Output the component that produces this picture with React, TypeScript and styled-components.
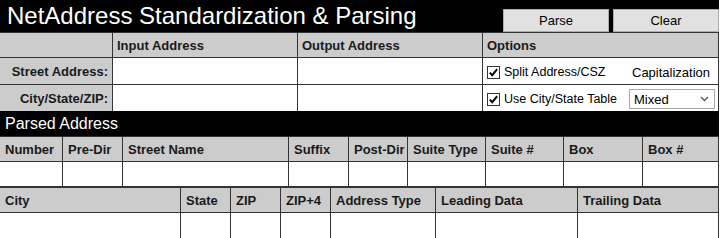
import styled, { createGlobalStyle } from 'styled-components'

const GlobalStyle = createGlobalStyle`
  html, body {
    margin: 0;
    padding: 0;
    background: #fff;
  }
  body {
    font-family: "Liberation Sans", Arial, sans-serif;
    color: #111;
  }
`

const Page = styled.div`
  width: 719px;
`

const TitleBar = styled.div`
  height: 32px;
  background: #000;
  display: flex;
  justify-content: space-between;
  align-items: flex-end;
  padding-left: 7px;
`

const Title = styled.h1`
  margin: 0;
  align-self: stretch;
  font-size: 24px;
  font-weight: normal;
  line-height: 32px;
  color: #fff;
  white-space: nowrap;
`

const ButtonGroup = styled.div`
  display: flex;
  gap: 4px;
`

const Button = styled.button`
  width: 106px;
  height: 23px;
  box-sizing: border-box;
  background: #e1e1e1;
  border: 1px solid #adadad;
  border-radius: 0;
  font-family: "Liberation Sans", Arial, sans-serif;
  font-size: 13px;
  color: #000;
  padding: 0;
`

const Grid = styled.div<{ $cols: string; $rows: string; $top?: number }>`
  display: grid;
  grid-template-columns: ${p => p.$cols};
  grid-template-rows: ${p => p.$rows};
  gap: 1px;
  background: #333;
  border-top: ${p => p.$top ?? 1}px solid #333;
  border-right: 1px solid #333;
`

const HeadCell = styled.div<{ $pad?: number }>`
  background: #cccccc;
  display: flex;
  align-items: center;
  padding-left: ${p => p.$pad ?? 5}px;
  padding-top: 1px;
  font-size: 13px;
  font-weight: bold;
  color: #1a1a1a;
  white-space: nowrap;
  overflow: hidden;
`

const LabelCell = styled(HeadCell)`
  justify-content: flex-end;
  padding-left: 0;
  padding-right: 4px;
`

const DataCell = styled.div`
  background: #fff;
`

const OptionCell = styled.div`
  background: #fff;
  display: grid;
  grid-template-columns: 1fr 86px;
  align-items: center;
  padding: 2px 3px 0 4px;
  font-size: 12.5px;
  color: #000;
`

const CheckLabel = styled.label`
  display: flex;
  align-items: center;
  gap: 4px;
  white-space: nowrap;
`

const Box = styled.span`
  width: 13px;
  height: 13px;
  box-sizing: border-box;
  border: 1px solid #333;
  background: #fff;
  display: flex;
  align-items: center;
  justify-content: center;
`

const CapLabel = styled.span`
  padding-left: 3px;
  font-size: 13px;
  white-space: nowrap;
`

const Select = styled.div`
  height: 20px;
  box-sizing: border-box;
  border: 1px solid #a9a9a9;
  background: #fff;
  display: flex;
  align-items: center;
  justify-content: space-between;
  padding: 0 5px 0 4px;
  font-size: 13px;
  color: #000;
`

const SectionBar = styled.div`
  height: 25px;
  box-sizing: border-box;
  background: #000;
  color: #fff;
  font-size: 16px;
  line-height: 24px;
  padding: 1px 0 0 5px;
`

const Checkbox = ({ label }: { label: string }) => (
  <CheckLabel>
    <Box>
      <svg width="11" height="11" viewBox="0 0 11 11">
        <path d="M1.8 5.6 L4.2 8.2 L9.2 2.2" fill="none" stroke="#000" strokeWidth="1.9" />
      </svg>
    </Box>
    {label}
  </CheckLabel>
)

const streetFields: [string, number][] = [
  ['Number', 62], ['Pre-Dir', 59], ['Street Name', 165], ['Suffix', 59], ['Post-Dir', 58],
  ['Suite Type', 77], ['Suite #', 77], ['Box', 78], ['Box #', 75],
]

const cityFields: [string, number][] = [
  ['City', 180], ['State', 49], ['ZIP', 49], ['ZIP+4', 49],
  ['Address Type', 104], ['Leading Data', 141], ['Trailing Data', 140],
]

const FieldTable = ({ fields, top, lastRow }: { fields: [string, number][]; top?: number; lastRow: string }) => (
  <Grid $cols={fields.map(f => f[1] + 'px').join(' ')} $rows={`24px ${lastRow}`} $top={top}>
    {fields.map(([name]) => <HeadCell key={name}>{name}</HeadCell>)}
    {fields.map(([name]) => <DataCell key={name + '-v'} />)}
  </Grid>
)

export default function App() {
  return (
    <Page>
      <GlobalStyle />
      <TitleBar>
        <Title>NetAddress Standardization &amp; Parsing</Title>
        <ButtonGroup>
          <Button>Parse</Button>
          <Button>Clear</Button>
        </ButtonGroup>
      </TitleBar>

      <Grid $cols="112px 184px 184px 235px" $rows="24px 26px 26px">
        <HeadCell />
        <HeadCell $pad={4}>Input Address</HeadCell>
        <HeadCell $pad={4}>Output Address</HeadCell>
        <HeadCell $pad={4}>Options</HeadCell>

        <LabelCell>Street Address:</LabelCell>
        <DataCell />
        <DataCell />
        <OptionCell>
          <Checkbox label="Split Address/CSZ" />
          <CapLabel>Capitalization</CapLabel>
        </OptionCell>

        <LabelCell>City/State/ZIP:</LabelCell>
        <DataCell />
        <DataCell />
        <OptionCell>
          <Checkbox label="Use City/State Table" />
          <Select>
            Mixed
            <svg width="9" height="6" viewBox="0 0 9 6">
              <path d="M1 1 L4.5 4.5 L8 1" fill="none" stroke="#555" strokeWidth="1.3" />
            </svg>
          </Select>
        </OptionCell>
      </Grid>

      <SectionBar>Parsed Address</SectionBar>
      <FieldTable fields={streetFields} lastRow="24px" />
      <FieldTable fields={cityFields} top={2} lastRow="25px" />
    </Page>
  )
}
